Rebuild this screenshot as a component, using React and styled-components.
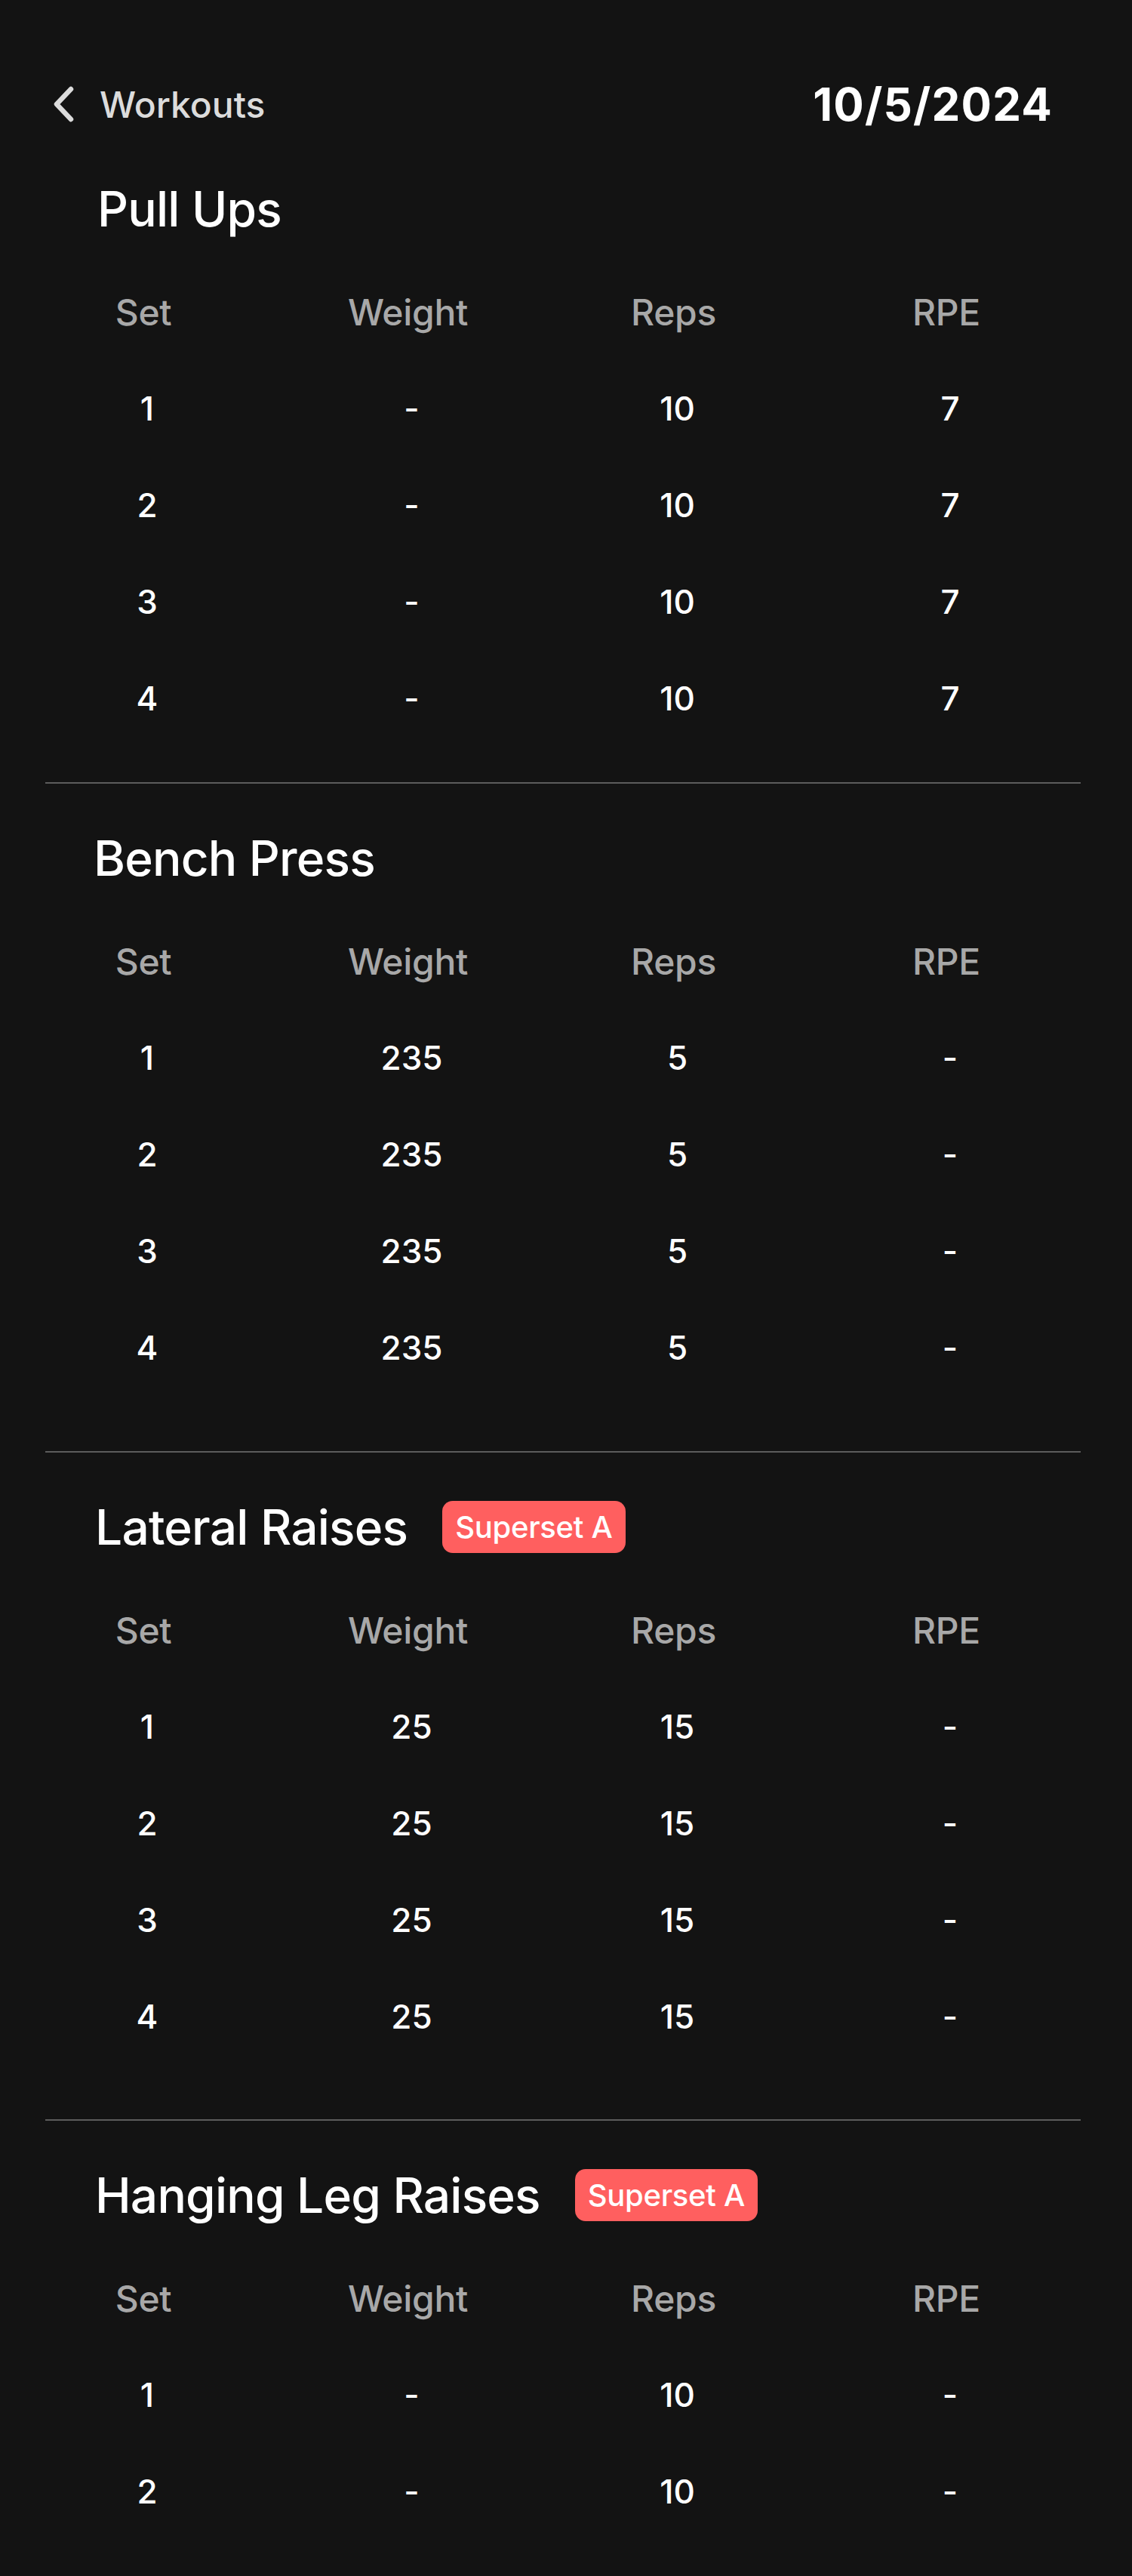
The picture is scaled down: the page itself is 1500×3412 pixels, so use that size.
import React from "react";
import styled, { createGlobalStyle } from "styled-components";

const GlobalStyle = createGlobalStyle`
  html, body {
    margin: 0;
    padding: 0;
    background: #131313;
  }
  body {
    font-family: Inter, "Noto Sans", "Liberation Sans", sans-serif;
    -webkit-font-smoothing: antialiased;
  }
`;

const Screen = styled.main`
  height: 100vh;
  overflow-y: auto;
  scrollbar-width: none;
  background: #131313;
  color: #ffffff;
  box-sizing: border-box;
  padding-top: 98px;
  &::-webkit-scrollbar { display: none; }
`;

const TopBar = styled.header`
  display: flex;
  align-items: center;
  justify-content: space-between;
  height: 80px;
  padding: 0 105px 0 68px;
`;

const BackLink = styled.button`
  display: flex;
  align-items: center;
  gap: 32px;
  background: none;
  border: 0;
  padding: 0;
  color: #dcdcdc;
  font-family: inherit;
  font-size: 48px;
  font-weight: 500;
  letter-spacing: 0px;
  cursor: pointer;
`;

const DateTitle = styled.h1`
  margin: 0;
  font-size: 60px;
  font-weight: 700;
  color: #ffffff;
  letter-spacing: 1.2px;
`;

const Section = styled.section`
  padding-top: 60px;
  padding-bottom: ${(p) => p.$bottom}px;
`;

const Divider = styled.hr`
  margin: 0 0 0 60px;
  width: 1372px;
  height: 2px;
  border: 0;
  background: #5c5c5c;
`;

const TitleRow = styled.div`
  display: flex;
  align-items: center;
  gap: 46px;
  height: 76px;
  padding-left: ${(p) => p.$indent}px;
`;

const ExerciseName = styled.h2`
  margin: 0;
  font-size: 64px;
  font-weight: 500;
  color: #ffffff;
  letter-spacing: -0.8px;
`;

const Badge = styled.span`
  display: inline-flex;
  align-items: center;
  height: 69px;
  padding: 0 17px;
  border-radius: 14px;
  background: #ff5f5f;
  color: #ffffff;
  font-size: 40px;
  font-weight: 500;
  letter-spacing: -0.3px;
  box-sizing: border-box;
`;

const Table = styled.div`
  margin-top: 35px;
`;

const Row = styled.div`
  display: grid;
  grid-template-columns: 354px 347px 357px 366px;
  padding-left: 13px;
  height: 128px;
  align-items: center;
`;

const HeadCell = styled.div`
  text-align: center;
  font-size: 48px;
  font-weight: 500;
  color: #a8a8a8;
  letter-spacing: -0.3px;
`;

const Cell = styled.div`
  text-align: center;
  font-size: 44px;
  font-weight: 500;
  color: #ffffff;
  padding-left: 10px;
`;

const ChevronLeft = () => (
  <svg width="32" height="50" viewBox="0 0 32 50" fill="none">
    <polyline
      points="26,5 7,25 26,45"
      stroke="#dcdcdc"
      strokeWidth="6.5"
      strokeLinecap="round"
      strokeLinejoin="round"
    />
  </svg>
);

const workouts = [
  {
    name: "Pull Ups",
    indent: 129,
    bottom: 47,
    sets: [
      ["1", "-", "10", "7"],
      ["2", "-", "10", "7"],
      ["3", "-", "10", "7"],
      ["4", "-", "10", "7"],
    ],
  },
  {
    name: "Bench Press",
    indent: 124,
    bottom: 73,
    sets: [
      ["1", "235", "5", "-"],
      ["2", "235", "5", "-"],
      ["3", "235", "5", "-"],
      ["4", "235", "5", "-"],
    ],
  },
  {
    name: "Lateral Raises",
    indent: 126,
    bottom: 72,
    badge: "Superset A",
    sets: [
      ["1", "25", "15", "-"],
      ["2", "25", "15", "-"],
      ["3", "25", "15", "-"],
      ["4", "25", "15", "-"],
    ],
  },
  {
    name: "Hanging Leg Raises",
    indent: 126,
    bottom: 72,
    badge: "Superset A",
    sets: [
      ["1", "-", "10", "-"],
      ["2", "-", "10", "-"],
      ["3", "-", "10", "-"],
      ["4", "-", "10", "-"],
    ],
  },
];

const headers = ["Set", "Weight", "Reps", "RPE"];

export default function App() {
  return (
    <>
      <GlobalStyle />
      <Screen>
        <TopBar>
          <BackLink>
            <ChevronLeft />
            Workouts
          </BackLink>
          <DateTitle>10/5/2024</DateTitle>
        </TopBar>
        {workouts.map((w, i) => (
          <React.Fragment key={w.name}>
            {i > 0 && <Divider />}
            <Section $bottom={w.bottom}>
              <TitleRow $indent={w.indent}>
                <ExerciseName>{w.name}</ExerciseName>
                {w.badge && <Badge>{w.badge}</Badge>}
              </TitleRow>
              <Table>
                <Row>
                  {headers.map((h) => (
                    <HeadCell key={h}>{h}</HeadCell>
                  ))}
                </Row>
                {w.sets.map((s) => (
                  <Row key={s[0]}>
                    {s.map((v, j) => (
                      <Cell key={j}>{v}</Cell>
                    ))}
                  </Row>
                ))}
              </Table>
            </Section>
          </React.Fragment>
        ))}
      </Screen>
    </>
  );
}
